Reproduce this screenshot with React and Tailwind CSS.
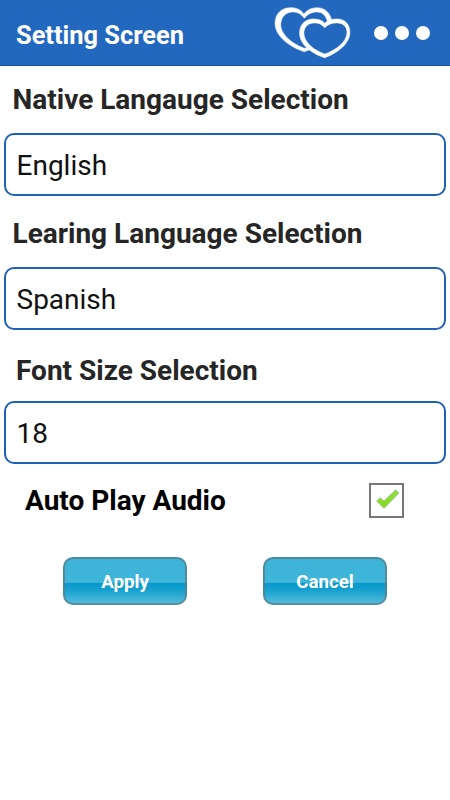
import React, { useState } from "react";
import clsx from "clsx";

const fields = [
  { id: "native", label: "Native Langauge Selection", value: "English", labelClass: "pl-[12.5px] pt-[18px] pb-[17px]" },
  { id: "learning", label: "Learing Language Selection", value: "Spanish", labelClass: "pl-[12.5px] pt-[22px] pb-[17px]" },
  { id: "font-size", label: "Font Size Selection", value: "18", labelClass: "pl-4 pt-[25px] pb-[14px]" },
];

const HeartsIcon = () => (
  <svg viewBox="42 18 232 160" className="h-[53px] w-[77px]" aria-hidden="true">
    <path
      fill="#fff"
      fillRule="evenodd"
      stroke="#fff"
      strokeWidth="1.5"
      d="M132 42 C142 29 156 23 174 23 C198 24 213 42 217 66 L216 90 L150 150 L133 156 C95 144 45 112 45 71 C45 41 64 23 92 23 C111 23 124 30 132 42 Z M133 55 C124 42 113 36 98 36 C75 37 62 53 62 76 C63 104 97 133 135 146 L205 90 L203 64 C198 46 187 36 171 36 C155 36 143 43 133 55 Z"
    />
    <path fill="#2268bf" d="M195 70 C187 61 176 57 160 57 C134 58 119 75 119 100 C119 138 164 165 195 174 C229 162 271 134 271 97 C271 73 256 57 232 57 C215 57 204 61 195 70 Z" />
    <path
      fill="#fff"
      fillRule="evenodd"
      stroke="#fff"
      strokeWidth="1.5"
      d="M195 70 C187 61 176 57 160 57 C134 58 119 75 119 100 C119 138 164 165 195 174 C229 162 271 134 271 97 C271 73 256 57 232 57 C215 57 204 61 195 70 Z M195 84 C186 73 177 69 164 69 C145 69 132 81 132 101 C133 129 164 152 195 163 C226 152 262 128 262 97 C262 79 249 69 231 69 C215 69 204 74 195 84 Z"
    />
  </svg>
);

const Header = () => (
  <header className="flex h-[66px] items-center border-b border-[#1057b4] bg-[#2268bf] pl-4 pr-[20.5px]">
    <h1 className="flex-1 whitespace-nowrap pt-[5px] text-[25.4px] font-bold leading-8 text-white">Setting Screen</h1>
    <HeartsIcon />
    <button type="button" aria-label="More" className="ml-[22.5px] flex gap-[7px]">
      <span className="size-[14px] rounded-full bg-white" />
      <span className="size-[14px] rounded-full bg-white" />
      <span className="size-[14px] rounded-full bg-white" />
    </button>
  </header>
);

const SelectField = ({ id, label, value, labelClass }) => (
  <div>
    <label htmlFor={id} className={clsx("block whitespace-nowrap text-[28px] font-bold leading-8 text-[#262626]", labelClass)}>
      {label}
    </label>
    <button id={id} type="button" className="mx-1 flex h-[63px] w-[442px] items-center rounded-[10px] border-2 border-[#1f61b5] bg-white pl-[10.5px] pt-[3px] text-[28px] leading-8 text-[#111]">
      {value}
    </button>
  </div>
);

const CheckMark = () => (
  <svg viewBox="2 2 31 31" className="size-full" aria-hidden="true">
    <defs>
      <linearGradient id="check-green" x1="0" y1="0" x2="0" y2="1">
        <stop offset="0" stopColor="#91dc43" />
        <stop offset="1" stopColor="#7fdc10" />
      </linearGradient>
    </defs>
    <path d="M7.5 18 L11 14.5 L15 17.8 L26.8 6.6 L30.2 10 L15 25.5 Z" fill="url(#check-green)" stroke="#bcbcc4" strokeWidth="0.9" strokeLinejoin="round" />
  </svg>
);

const GlossyButton = ({ children }) => (
  <button
    type="button"
    className="flex h-12 w-[124px] justify-center rounded-[10px] border-2 border-[#56808f]/80 bg-[linear-gradient(to_bottom,#3db3d8_0%,#3fb5d9_53%,#0798c9_55%,#139fce_67%,#5abedb_100%)] bg-origin-border pt-[9px] text-[18.7px] font-bold leading-7 text-white"
  >
    {children}
  </button>
);

const App = () => {
  const [autoPlay, setAutoPlay] = useState(true);
  return (
    <div className="min-h-screen w-[450px] bg-white font-['Roboto',sans-serif]">
      <Header />
      <main>
        {fields.map((field) => (
          <SelectField key={field.id} {...field} />
        ))}
        <div className="mt-[19px] flex h-[35px] items-center justify-between pl-[25px] pr-[46px]">
          <span className="text-[28px] font-bold leading-8 text-black">Auto Play Audio</span>
          <button type="button" role="checkbox" aria-checked={autoPlay} aria-label="Auto Play Audio" onClick={() => setAutoPlay(!autoPlay)} className="size-[35px] border-2 border-[#777] bg-white">
            {autoPlay ? <CheckMark /> : null}
          </button>
        </div>
        <div className="mt-[39px] flex gap-[76px] pl-[63px]">
          <GlossyButton>Apply</GlossyButton>
          <GlossyButton>Cancel</GlossyButton>
        </div>
      </main>
    </div>
  );
};

export default App;
